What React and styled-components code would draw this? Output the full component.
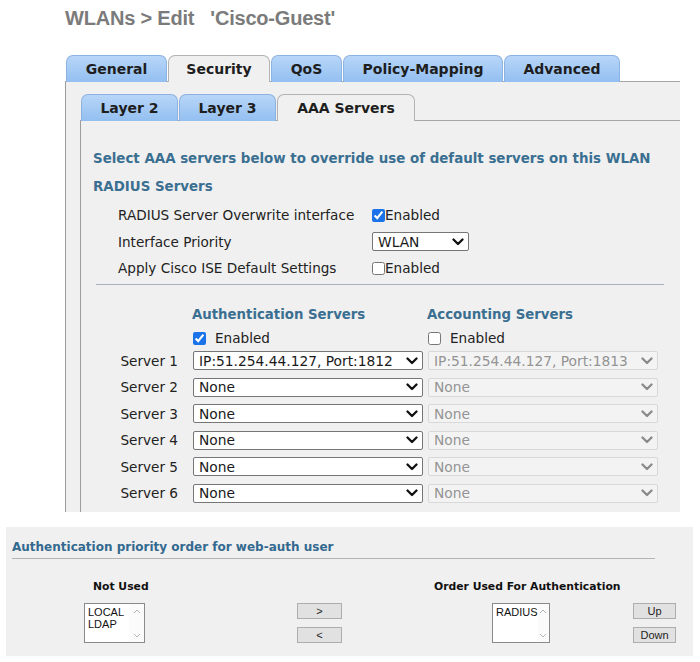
import React from "react";
import styled, { createGlobalStyle } from "styled-components";

const GlobalStyle = createGlobalStyle`
  body {
    margin: 0;
    background: #fff;
    font-family: "DejaVu Sans", Verdana, sans-serif;
  }
`;

const Page = styled.div`
  width: 700px;
  height: 662px;
  overflow: hidden;
  background: #fff;
`;

const PageTitle = styled.h1`
  margin: 0;
  height: 55px;
  box-sizing: border-box;
  padding: 7px 0 0 65px;
  font-family: "Liberation Sans Narrow", "Liberation Sans", Arial, sans-serif;
  font-size: 20px;
  line-height: 23px;
  font-weight: bold;
  letter-spacing: -0.2px;
  color: #7b7b7b;
  white-space: pre;
`;

const Panel = styled.div`
  margin-left: ${(p) => p.$left}px;
  width: ${(p) => p.$width}px;
`;

const TabBar = styled.div`
  display: flex;
  align-items: flex-end;
  gap: 1px;
  height: 26px;
  padding-left: 1px;
  border-bottom: 1px solid #a6a6a6;
`;

const Tab = styled.div`
  width: ${(p) => p.$w}px;
  height: 27px;
  margin-bottom: -1px;
  box-sizing: border-box;
  display: flex;
  align-items: center;
  justify-content: center;
  border: 1px solid ${(p) => (p.$active ? "#b3b3b3" : "#8cb2e2")};
  border-bottom: none;
  border-radius: 7px 7px 0 0;
  background: ${(p) =>
    p.$active ? "#f0f0f0" : "linear-gradient(#b8d6f8, #93bff1)"};
  font-size: 14px;
  font-weight: bold;
  color: #1e1e1e;
  position: relative;
  z-index: 1;
`;

const OuterBody = styled.div`
  background: #f0f0f0;
  border-left: 1px solid #9c9c9c;
  padding: 12px 0 0 14px;
`;

const InnerBody = styled.div`
  border-left: 1px solid #9c9c9c;
  padding: 30px 0 5px 0;
`;

const Heading = styled.div`
  margin: ${(p) => p.$mt || 0}px 0 0 12px;
  font-size: 13.4px;
  line-height: 16px;
  font-weight: bold;
  color: #3a6f91;
`;

const RadiusGrid = styled.div`
  margin: 7px 0 0 37px;
  display: grid;
  grid-template-columns: 254px auto;
  grid-auto-rows: 26.5px;
  align-items: center;
  font-size: 13.6px;
  color: #222;
`;

const Inline = styled.div`
  display: flex;
  align-items: center;
  gap: ${(p) => p.$gap || 0}px;
`;

const Check = styled.input.attrs({ type: "checkbox", readOnly: true })`
  width: 13px;
  height: 13px;
  margin: 0;
  accent-color: #1a73e8;
`;

const Divider = styled.div`
  margin: 2px 0 0 15px;
  width: 568px;
  height: 1px;
  background: #a9b0bf;
`;

const ServerGrid = styled.div`
  display: grid;
  grid-template-columns: 112px 235px 230px;
  align-items: center;
  margin-top: ${(p) => p.$mt || 0}px;
  grid-auto-rows: ${(p) => p.$row}px;
  font-size: 13.6px;
  color: #222;
`;

const ColHeading = styled.div`
  font-size: 13.3px;
  font-weight: bold;
  color: #3a6f91;
  margin-left: -1px;
`;

const ServerLabel = styled.div`
  text-align: right;
  padding-right: 15px;
`;

const SelectBox = styled.div`
  width: ${(p) => p.$w}px;
  height: 19px;
  box-sizing: border-box;
  display: flex;
  align-items: center;
  justify-content: space-between;
  padding: 0 4px 0 5px;
  border: 1px solid ${(p) => (p.$disabled ? "#d8d8d8" : "#767676")};
  border-radius: 2px;
  background: ${(p) => (p.$disabled ? "#f3f3f3" : "#fff")};
  color: ${(p) => (p.$disabled ? "#949494" : "#1a1a1a")};
  font-size: 13.8px;
  white-space: nowrap;
  overflow: hidden;
`;

const Chevron = ({ color }) => (
  <svg width="12" height="8" viewBox="0 0 12 8" style={{ flexShrink: 0 }}>
    <path
      d="M1.5 1.5 L6 6 L10.5 1.5"
      fill="none"
      stroke={color}
      strokeWidth="2.3"
      strokeLinecap="round"
      strokeLinejoin="round"
    />
  </svg>
);

const Select = ({ w, disabled, children }) => (
  <SelectBox $w={w} $disabled={disabled}>
    <span>{children}</span>
    <Chevron color={disabled ? "#8a8a8a" : "#111"} />
  </SelectBox>
);

const BottomPanel = styled.div`
  margin: 15px 0 0 6px;
  width: 687px;
  height: 129px;
  box-sizing: border-box;
  background: #f0f0f0;
  padding: 13px 0 0 6px;
`;

const BottomTitle = styled.div`
  font-size: 12px;
  line-height: 14px;
  font-weight: bold;
  color: #33698f;
`;

const BottomRule = styled.div`
  margin-top: 4px;
  width: 643px;
  height: 1px;
  background: #b4b4b4;
`;

const OrderGrid = styled.div`
  margin: 21px 0 0 72px;
  display: grid;
  grid-template-columns: 213px 137px 199px auto;
  grid-template-rows: 14px auto;
  row-gap: 9px;
`;

const ListLabel = styled.div`
  font-size: 10.8px;
  line-height: 14px;
  font-weight: bold;
  color: #111;
  margin-left: ${(p) => p.$ml || 0}px;
`;

const ListBox = styled.div`
  margin-left: ${(p) => p.$ml || 0}px;
  width: ${(p) => p.$w}px;
  height: 40px;
  box-sizing: border-box;
  border: 1px solid #8a8a8a;
  background: #fff;
  display: flex;
`;

const ListItems = styled.div`
  flex: 1;
  padding: 2px 0 0 3px;
  font-family: "Liberation Sans", Arial, sans-serif;
  font-size: 11px;
  line-height: 12px;
  color: #111;
`;

const ScrollTrack = styled.div`
  width: 15px;
  display: flex;
  flex-direction: column;
  justify-content: space-between;
  align-items: center;
  padding: 5px 0 4px;
  background: #fbfbfb;
`;

const ScrollArrow = ({ up }) => (
  <svg width="8" height="5" viewBox="0 0 8 5">
    <path
      d={up ? "M1 4 L4 1 L7 4" : "M1 1 L4 4 L7 1"}
      fill="none"
      stroke="#b5b5b5"
      strokeWidth="1"
    />
  </svg>
);

const ButtonStack = styled.div`
  display: flex;
  flex-direction: column;
  gap: 8px;
`;

const SmallButton = styled.div`
  width: ${(p) => p.$w}px;
  height: 16px;
  box-sizing: border-box;
  display: flex;
  align-items: center;
  justify-content: center;
  background: #e1e1e1;
  border: 1px solid #adadad;
  font-family: "Liberation Sans", Arial, sans-serif;
  font-size: 11px;
  color: #222;
`;

const mainTabs = [
  { label: "General", w: 101 },
  { label: "Security", w: 102, active: true },
  { label: "QoS", w: 71 },
  { label: "Policy-Mapping", w: 160 },
  { label: "Advanced", w: 116 },
];

const subTabs = [
  { label: "Layer 2", w: 97 },
  { label: "Layer 3", w: 97 },
  { label: "AAA Servers", w: 138, active: true },
];

const servers = [1, 2, 3, 4, 5, 6];

const List = ({ w, ml, items }) => (
  <ListBox $w={w} $ml={ml}>
    <ListItems>
      {items.map((it) => (
        <div key={it}>{it}</div>
      ))}
    </ListItems>
    <ScrollTrack>
      <ScrollArrow up />
      <ScrollArrow />
    </ScrollTrack>
  </ListBox>
);

export default function App() {
  return (
    <Page>
      <GlobalStyle />
      <PageTitle>{"WLANs > Edit   'Cisco-Guest'"}</PageTitle>
      <Panel $left={65} $width={615}>
        <TabBar>
          {mainTabs.map((t) => (
            <Tab key={t.label} $w={t.w} $active={t.active}>
              {t.label}
            </Tab>
          ))}
        </TabBar>
        <OuterBody>
          <TabBar>
            {subTabs.map((t) => (
              <Tab key={t.label} $w={t.w} $active={t.active}>
                {t.label}
              </Tab>
            ))}
          </TabBar>
          <InnerBody>
            <Heading>
              Select AAA servers below to override use of default servers on this WLAN
            </Heading>
            <Heading $mt={12}>RADIUS Servers</Heading>
            <RadiusGrid>
              <div>RADIUS Server Overwrite interface</div>
              <Inline>
                <Check checked />
                <span>Enabled</span>
              </Inline>
              <div>Interface Priority</div>
              <Select w={97}>WLAN</Select>
              <div>Apply Cisco ISE Default Settings</div>
              <Inline>
                <Check checked={false} />
                <span>Enabled</span>
              </Inline>
            </RadiusGrid>
            <Divider />
            <ServerGrid $mt={22} $row={15}>
              <div />
              <ColHeading>Authentication Servers</ColHeading>
              <ColHeading>Accounting Servers</ColHeading>
            </ServerGrid>
            <ServerGrid $mt={9} $row={15}>
              <div />
              <Inline $gap={9}>
                <Check checked />
                <span>Enabled</span>
              </Inline>
              <Inline $gap={9}>
                <Check checked={false} />
                <span>Enabled</span>
              </Inline>
            </ServerGrid>
            <ServerGrid $mt={2} $row={26.5}>
              {servers.map((n) => (
                <React.Fragment key={n}>
                  <ServerLabel>Server {n}</ServerLabel>
                  <Select w={230}>
                    {n === 1 ? "IP:51.254.44.127, Port:1812" : "None"}
                  </Select>
                  <Select w={230} disabled>
                    {n === 1 ? "IP:51.254.44.127, Port:1813" : "None"}
                  </Select>
                </React.Fragment>
              ))}
            </ServerGrid>
          </InnerBody>
        </OuterBody>
      </Panel>
      <BottomPanel>
        <BottomTitle>Authentication priority order for web-auth user</BottomTitle>
        <BottomRule />
        <OrderGrid>
          <ListLabel $ml={9}>Not Used</ListLabel>
          <div />
          <ListLabel>Order Used For Authentication</ListLabel>
          <div />
          <List w={61} items={["LOCAL", "LDAP"]} />
          <ButtonStack>
            <SmallButton $w={45}>&gt;</SmallButton>
            <SmallButton $w={45}>&lt;</SmallButton>
          </ButtonStack>
          <List w={58} ml={58} items={["RADIUS"]} />
          <ButtonStack>
            <SmallButton $w={43}>Up</SmallButton>
            <SmallButton $w={43}>Down</SmallButton>
          </ButtonStack>
        </OrderGrid>
      </BottomPanel>
    </Page>
  );
}
